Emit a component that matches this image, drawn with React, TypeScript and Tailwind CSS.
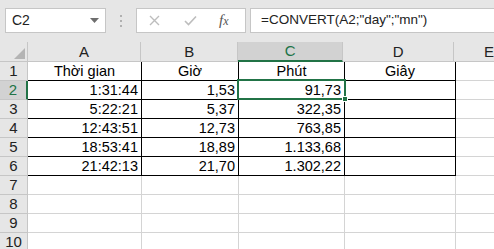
import React from 'react'

const cols = [
  { key: 'A', w: 114 },
  { key: 'B', w: 97 },
  { key: 'C', w: 106 },
  { key: 'D', w: 111 },
]

const data: string[][] = [
  ['Thời gian', 'Giờ', 'Phút', 'Giây'],
  ['1:31:44', '1,53', '91,73', ''],
  ['5:22:21', '5,37', '322,35', ''],
  ['12:43:51', '12,73', '763,85', ''],
  ['18:53:41', '18,89', '1.133,68', ''],
  ['21:42:13', '21,70', '1.302,22', ''],
]

const font = { fontFamily: '"Liberation Sans", Arial, sans-serif' }

const FormulaBar = () => (
  <div className="flex h-[42px] items-start bg-[#e6e6e6] pt-[8px]">
    <div className="ml-[5px] flex h-[25px] w-[101px] items-center justify-between border border-[#c6c6c6] bg-white pl-[6px] pr-[6px] text-[14px] text-[#222]">
      <span>C2</span>
      <svg width="9" height="5" viewBox="0 0 9 5">
        <path d="M0 0 L9 0 L4.5 5 Z" fill="#6e6e6e" />
      </svg>
    </div>
    <div className="ml-[14px] mr-[14px] flex h-[25px] flex-col items-center justify-center gap-[3px]">
      <span className="h-[2px] w-[2px] bg-[#b0b0b0]" />
      <span className="h-[2px] w-[2px] bg-[#b0b0b0]" />
      <span className="h-[2px] w-[2px] bg-[#b0b0b0]" />
    </div>
    <div className="flex h-[25px] w-[110px] items-center border border-[#c6c6c6] bg-white">
      <svg className="ml-[12px]" width="11" height="11" viewBox="0 0 11 11">
        <path d="M1 1 L10 10 M10 1 L1 10" stroke="#bdbdbd" strokeWidth="1.4" />
      </svg>
      <svg className="ml-[24px]" width="13" height="11" viewBox="0 0 13 11">
        <path d="M1 6 L4.5 9.5 L12 1.5" stroke="#bdbdbd" strokeWidth="1.6" fill="none" />
      </svg>
      <span
        className="ml-[22px] text-[15px] italic text-[#555]"
        style={{ fontFamily: '"Liberation Serif", "Times New Roman", serif' }}
      >
        f<span className="text-[12px]">x</span>
      </span>
    </div>
    <div className="ml-[4px] flex h-[25px] flex-1 items-center border-y border-l border-[#c6c6c6] bg-white pl-[10px] text-[13.5px] text-[#222]">
      =CONVERT(A2;"day";"mn")
    </div>
  </div>
)

const HeaderRow = () => (
  <div className="flex h-[20px] bg-[#e6e6e6]">
    <div className="relative w-[28px] border-r border-b border-[#c6c6c6]">
      <svg className="absolute right-[2px] bottom-[2px]" width="11" height="11" viewBox="0 0 11 11">
        <path d="M11 0 L11 11 L0 11 Z" fill="#b4b4b4" />
      </svg>
    </div>
    {cols.map((c) =>
      c.key === 'C' ? (
        <div
          key={c.key}
          style={{ width: c.w }}
          className="flex items-end justify-center border-r border-b-2 border-r-[#c6c6c6] border-b-[#217346] bg-[#d2d2d2] text-[15px] leading-[18px] text-[#217346]"
        >
          {c.key}
        </div>
      ) : (
        <div
          key={c.key}
          style={{ width: c.w }}
          className="flex items-end justify-center border-r border-b border-[#c6c6c6] text-[15px] leading-[19px] text-[#222]"
        >
          {c.key}
        </div>
      )
    )}
    <div className="flex-1 border-b border-[#c6c6c6] pl-[30px] text-[15px] leading-[19px] text-[#222]">E</div>
  </div>
)

const Row = ({ n, cells }: { n: number; cells?: string[] }) => (
  <div className="flex h-[19px]">
    {n === 2 ? (
      <div className="flex w-[28px] items-end justify-center border-r-2 border-b border-r-[#217346] border-b-[#c6c6c6] bg-[#d2d2d2] text-[15px] leading-[18px] text-[#217346]">
        {n}
      </div>
    ) : (
      <div className="flex w-[28px] items-end justify-center border-r border-b border-[#c6c6c6] bg-[#e6e6e6] text-[15px] leading-[18px] text-[#222]">
        {n}
      </div>
    )}
    {cols.map((c, i) => (
      <div
        key={c.key}
        style={{ width: c.w }}
        className={
          cells
            ? `flex items-end border-r border-b border-black px-[3px] text-[14.5px] leading-[18px] text-black ${
                n === 1 ? 'justify-center' : 'justify-end'
              }`
            : 'border-r border-b border-[#d4d4d4]'
        }
      >
        {cells ? cells[i] : null}
      </div>
    ))}
    <div className="flex-1 border-b border-[#d4d4d4]" />
  </div>
)

export default function App() {
  return (
    <div className="relative h-[249px] w-[494px] overflow-hidden bg-white" style={font}>
      <FormulaBar />
      <HeaderRow />
      {Array.from({ length: 10 }).map((_, i) => (
        <Row key={i} n={i + 1} cells={data[i]} />
      ))}
      {/* selection on C2 */}
      <div className="pointer-events-none absolute left-[237px] top-[79px] h-[21px] w-[109px] border-2 border-[#217346]" />
      <div className="pointer-events-none absolute left-[342px] top-[96px] h-[6px] w-[6px] border border-white bg-[#217346]" />
    </div>
  )
}
